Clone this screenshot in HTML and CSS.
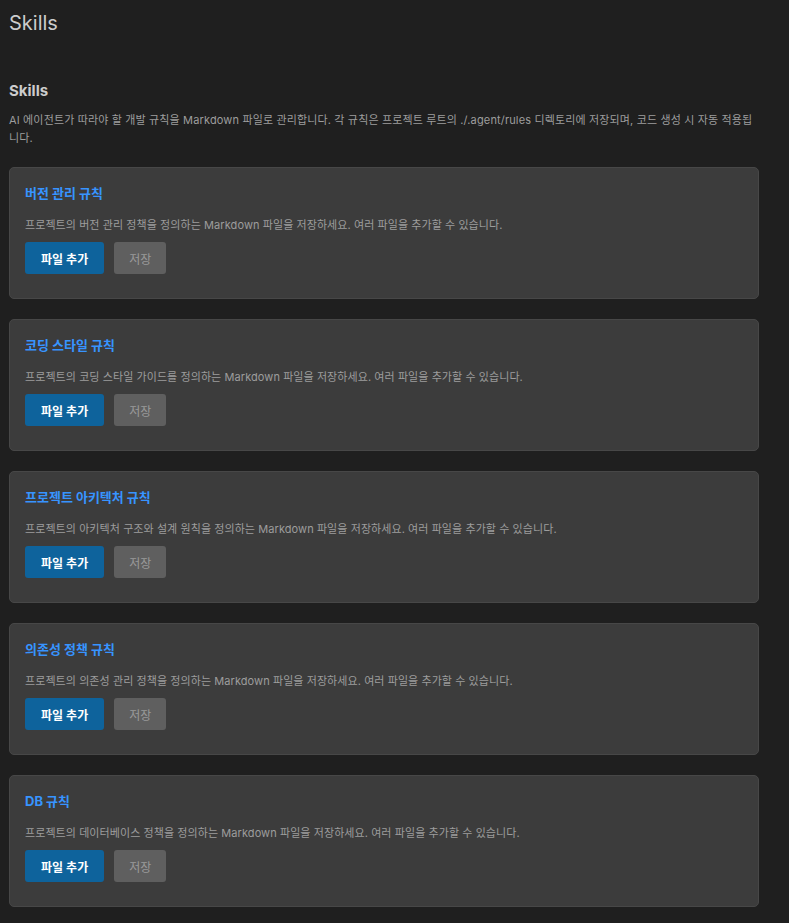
FILE: index.html
```html
<!doctype html>
<html lang="ko">
<head>
<meta charset="utf-8">
<title>Skills</title>
<link rel="stylesheet" href="styles.css">
</head>
<body>
<div class="page">
  <h1 class="page-title">Skills</h1>

  <section class="skills">
    <h2 class="skills-title">Skills</h2>
    <p class="skills-desc">AI 에이전트가 따라야 할 개발 규칙을 Markdown 파일로 관리합니다. 각 규칙은 프로젝트 루트의 ./.agent/rules 디렉토리에 저장되며, 코드 생성 시 자동 적용됩니다.</p>

    <div class="rule-card">
      <h3 class="rule-title">버전 관리 규칙</h3>
      <p class="rule-desc">프로젝트의 버전 관리 정책을 정의하는 Markdown 파일을 저장하세요. 여러 파일을 추가할 수 있습니다.</p>
      <div class="rule-actions">
        <button class="btn btn-primary">파일 추가</button>
        <button class="btn btn-secondary" disabled>저장</button>
      </div>
    </div>

    <div class="rule-card">
      <h3 class="rule-title">코딩 스타일 규칙</h3>
      <p class="rule-desc">프로젝트의 코딩 스타일 가이드를 정의하는 Markdown 파일을 저장하세요. 여러 파일을 추가할 수 있습니다.</p>
      <div class="rule-actions">
        <button class="btn btn-primary">파일 추가</button>
        <button class="btn btn-secondary" disabled>저장</button>
      </div>
    </div>

    <div class="rule-card">
      <h3 class="rule-title">프로젝트 아키텍처 규칙</h3>
      <p class="rule-desc">프로젝트의 아키텍처 구조와 설계 원칙을 정의하는 Markdown 파일을 저장하세요. 여러 파일을 추가할 수 있습니다.</p>
      <div class="rule-actions">
        <button class="btn btn-primary">파일 추가</button>
        <button class="btn btn-secondary" disabled>저장</button>
      </div>
    </div>

    <div class="rule-card">
      <h3 class="rule-title">의존성 정책 규칙</h3>
      <p class="rule-desc">프로젝트의 의존성 관리 정책을 정의하는 Markdown 파일을 저장하세요. 여러 파일을 추가할 수 있습니다.</p>
      <div class="rule-actions">
        <button class="btn btn-primary">파일 추가</button>
        <button class="btn btn-secondary" disabled>저장</button>
      </div>
    </div>

    <div class="rule-card">
      <h3 class="rule-title">DB 규칙</h3>
      <p class="rule-desc">프로젝트의 데이터베이스 정책을 정의하는 Markdown 파일을 저장하세요. 여러 파일을 추가할 수 있습니다.</p>
      <div class="rule-actions">
        <button class="btn btn-primary">파일 추가</button>
        <button class="btn btn-secondary" disabled>저장</button>
      </div>
    </div>
  </section>
</div>
</body>
</html>
```

FILE: styles.css
```css
*{margin:0;padding:0;box-sizing:border-box}
body{background:#1f1f1f; color:#cccccc; font-family:Inter,"Noto Sans CJK KR",sans-serif;}

.page{width:759px; padding:11px 0 20px 9px;}
.page-title{font-size:20px; font-weight:400; line-height:24px; color:#cccccc;}

.skills{margin-top:46px;}
.skills-title{font-size:15px; font-weight:700; line-height:20px; color:#cccccc;}
.skills-desc{margin:10px 0 1px; font-size:11px; line-height:18px; letter-spacing:0.15px; color:#9d9d9d;}

.rule-card{margin-top:20px; padding:15px 15px 24px; background:#3c3c3c; border:1px solid #474747; border-radius:5px;}
.rule-title{font-size:13px; font-weight:700; line-height:20px; color:#3794ff;}
.rule-desc{margin-top:14px; font-size:11px; line-height:16px; letter-spacing:0.08px; color:#9d9d9d;}
.rule-actions{display:flex; gap:10px; margin-top:9px;}

.btn{height:32px; padding:0 16px; border:none; border-radius:3px; font-family:inherit; font-size:12px; font-weight:600; cursor:pointer;}
.btn-primary{background:#0e639c; color:#ffffff;}
.btn-primary:hover{background:#1177bb;}
.btn-secondary{width:52px; padding:0; background:#5f5f5f; color:#9a9a9a; font-weight:400; cursor:default;}
```
